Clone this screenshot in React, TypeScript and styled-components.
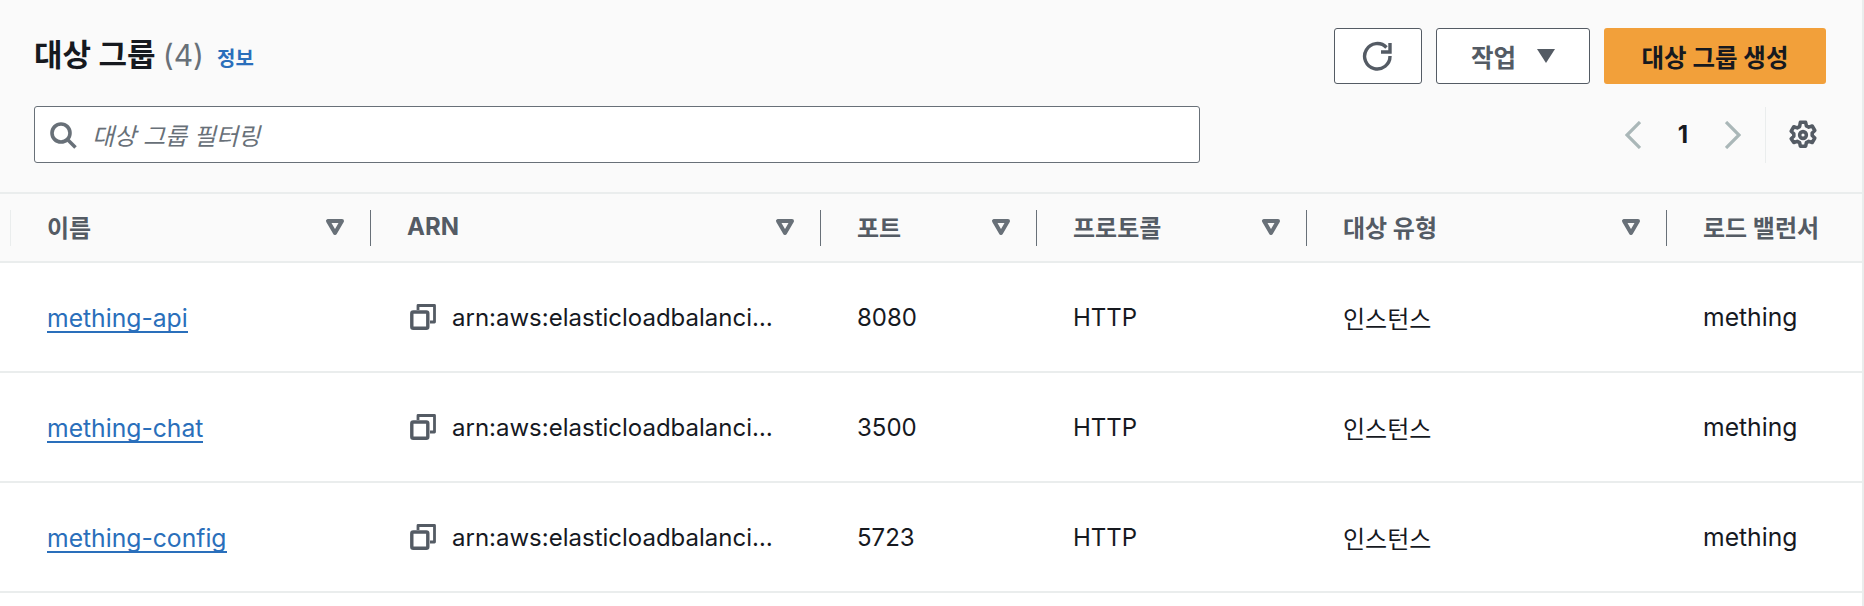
import React from "react";
import styled, { createGlobalStyle } from "styled-components";

const FONT = `Inter, "Noto Sans CJK KR", sans-serif`;

const Global = createGlobalStyle`
  html, body { margin: 0; padding: 0; background: #fff; }
  body { font-family: ${FONT}; color: #16191f; }
`;

const Page = styled.div`
  width: 1864px;
  height: 606px;
  overflow: hidden;
  box-sizing: border-box;
  border-right: 2px solid #eaeded;
  background: #fff;
`;

const Top = styled.header`
  height: 192px;
  background: #fafafa;
  border-bottom: 2px solid #eaeded;
  padding: 0 36px 0 34px;
  display: flex;
  flex-direction: column;
`;

const TitleRow = styled.div`
  display: flex;
  align-items: flex-start;
  justify-content: space-between;
  padding-top: 28px;
  height: 57px;
`;

const TitleGroup = styled.div`
  display: flex;
  align-items: baseline;
  gap: 13px;
  padding-top: 7px;
`;

const Title = styled.h1`
  margin: 0;
  font-size: 31px;
  line-height: 40px;
  font-weight: 700;
  color: #16191f;
`;

const Count = styled.span`
  font-size: 30px;
  font-weight: 400;
  color: #687078;
`;

const Info = styled.a`
  font-size: 20px;
  font-weight: 700;
  color: #2a6fbb;
`;

const Actions = styled.div`
  display: flex;
  gap: 14px;
`;

const Button = styled.button<{ $w: number; $primary?: boolean }>`
  width: ${(p) => p.$w}px;
  height: 56px;
  box-sizing: border-box;
  border-radius: 3px;
  border: ${(p) => (p.$primary ? "none" : "1.5px solid #545b64")};
  background: ${(p) => (p.$primary ? "#f2a03a" : "#fff")};
  color: ${(p) => (p.$primary ? "#16191f" : "#545b64")};
  font-family: ${FONT};
  font-size: 24.5px;
  font-weight: 700;
  display: inline-flex;
  align-items: center;
  justify-content: center;
  gap: 21px;
  padding: 0;
`;

const FilterRow = styled.div`
  display: flex;
  align-items: center;
  justify-content: space-between;
  margin-top: 21px;
`;

const Search = styled.div`
  width: 1166px;
  height: 57px;
  box-sizing: border-box;
  border: 1.5px solid #687078;
  border-radius: 3px;
  background: #fff;
  display: flex;
  align-items: center;
  gap: 15px;
  padding-left: 14px;
`;

const Placeholder = styled.span`
  font-size: 24px;
  font-style: italic;
  color: #687078;
`;

const Pager = styled.div`
  display: flex;
  align-items: center;
  height: 56px;
  padding-right: 8px;
`;

const PageNo = styled.span`
  font-size: 24px;
  font-weight: 700;
  color: #16191f;
  width: 84px;
  text-align: center;
`;

const PagerDivider = styled.span`
  width: 1px;
  height: 56px;
  background: #eaeded;
  margin: 0 22px 0 24px;
`;

const HeadRow = styled.div`
  height: 67px;
  background: #fafafa;
  border-bottom: 2px solid #eaeded;
  display: grid;
  grid-template-columns: 10px 360px 450px 216px 270px 360px 1fr;
  align-items: center;
`;

const HeadCell = styled.div<{ $first?: boolean }>`
  height: 36px;
  box-sizing: border-box;
  border-left: 1px solid ${(p) => (p.$first ? "#eaeded" : "#687078")};
  padding: 0 25px 2px 36px;
  display: flex;
  align-items: center;
  justify-content: space-between;
  font-size: 24px;
  font-weight: 700;
  color: #545b64;
  white-space: nowrap;
`;

const Row = styled.div`
  height: 108px;
  border-bottom: 2px solid #eaeded;
  display: grid;
  grid-template-columns: 10px 360px 450px 216px 270px 360px 1fr;
  align-items: center;
  font-size: 24px;
  color: #16191f;
`;

const Cell = styled.div<{ $wide?: boolean }>`
  padding-left: 37px;
  white-space: nowrap;
  display: flex;
  align-items: center;
  min-width: 0;
  font-size: ${(p) => (p.$wide ? "24.7px" : "24px")};
`;

const NameLink = styled.a`
  color: #2a6fbb;
  border-bottom: 2px solid #2a6fbb;
  line-height: 25px;
  padding-top: 5px;
`;

const CopyWrap = styled.span`
  display: inline-flex;
  margin: 0 16px 0 3px;
`;

const SortIcon = () => (
  <svg width="20" height="18" viewBox="0 0 20 18" fill="none">
    <path d="M3 3h14L10 15z" stroke="#687078" strokeWidth="4" strokeLinejoin="round" />
  </svg>
);

const RefreshIcon = () => (
  <svg width="32" height="32" viewBox="0 0 32 32" fill="none" stroke="#545b64" strokeWidth="3.4">
    <path d="M24.500 7.500A12.700 12.700 0 1 0 28 16" />
    <path d="M28 3v9H19" />
  </svg>
);

const SearchIcon = () => (
  <svg width="28" height="28" viewBox="0 0 28 28" fill="none" stroke="#687078" strokeWidth="3.600">
    <circle cx="12" cy="12" r="9" />
    <path d="M18.500 18.500l8 8" />
  </svg>
);

const CopyIcon = () => (
  <svg width="26" height="26" viewBox="0 0 26 26" fill="none" stroke="#545b64">
    <rect x="1.800" y="8" width="16" height="16.200" rx="1.500" strokeWidth="3.400" />
    <path d="M8 6V1.500h16.500V18H20" strokeWidth="2.800" strokeLinejoin="round" />
  </svg>
);

const Chevron = ({ dir }: { dir: "l" | "r" }) => (
  <svg width="16" height="28" viewBox="0 0 16 28" fill="none" stroke="#aab7b8" strokeWidth="3.2">
    <path d={dir === "l" ? "M15 1L2 14l13 13" : "M1 1l13 13L1 27"} />
  </svg>
);

const GearIcon = () => (
  <svg width="30" height="30" viewBox="0 0 16 16" fill="none" stroke="#545b64" strokeWidth="1.9" strokeLinejoin="round">
    <path d="M6.600 1.200h2.800l.4 1.900 1.300.7 1.800-.6 1.400 2.400-1.400 1.300v1.400l1.400 1.300-1.400 2.400-1.800-.6-1.300.7-.4 1.900H6.600l-.4-1.900-1.300-.7-1.800.6L1.700 10l1.400-1.300V7.300L1.700 6l1.400-2.400 1.800.6 1.300-.7z" />
    <circle cx="8" cy="8" r="1.800" />
  </svg>
);

const rows = [
  { name: "mething-api", port: "8080" },
  { name: "mething-chat", port: "3500" },
  { name: "mething-config", port: "5723" },
];

const heads = ["이름", "ARN", "포트", "프로토콜", "대상 유형"];

export default function App() {
  return (
    <Page>
      <Global />
      <Top>
        <TitleRow>
          <TitleGroup>
            <Title>
              대상 그룹 <Count>(4)</Count>
            </Title>
            <Info>정보</Info>
          </TitleGroup>
          <Actions>
            <Button $w={88}>
              <RefreshIcon />
            </Button>
            <Button $w={154}>
              작업
              <svg width="18" height="14" viewBox="0 0 18 14">
                <path d="M0 0h18L9 14z" fill="#545b64" />
              </svg>
            </Button>
            <Button $w={222} $primary>
              대상 그룹 생성
            </Button>
          </Actions>
        </TitleRow>
        <FilterRow>
          <Search>
            <SearchIcon />
            <Placeholder>대상 그룹 필터링</Placeholder>
          </Search>
          <Pager>
            <Chevron dir="l" />
            <PageNo>1</PageNo>
            <Chevron dir="r" />
            <PagerDivider />
            <GearIcon />
          </Pager>
        </FilterRow>
      </Top>
      <HeadRow>
        <span />
        {heads.map((h, i) => (
          <HeadCell key={h} $first={i === 0}>
            {h}
            <SortIcon />
          </HeadCell>
        ))}
        <HeadCell>로드 밸런서</HeadCell>
      </HeadRow>
      {rows.map((r) => (
        <Row key={r.name}>
          <span />
          <Cell $wide>
            <NameLink>{r.name}</NameLink>
          </Cell>
          <Cell>
            <CopyWrap>
              <CopyIcon />
            </CopyWrap>
            arn:aws:elasticloadbalanci…
          </Cell>
          <Cell>{r.port}</Cell>
          <Cell>HTTP</Cell>
          <Cell>인스턴스</Cell>
          <Cell $wide>mething</Cell>
        </Row>
      ))}
    </Page>
  );
}
